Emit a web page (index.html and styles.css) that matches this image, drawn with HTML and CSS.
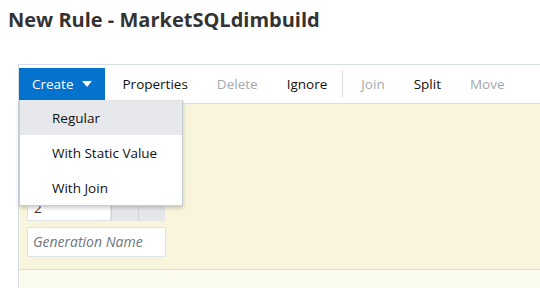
FILE: index.html
```html
<!DOCTYPE html>
<html lang="en">

<head>
    <meta charset="UTF-8">
    <title>New Rule - MarketSQLdimbuild</title>
    <link rel="stylesheet" href="styles.css">
</head>

<body>
    <h1 class="page-title">New Rule - MarketSQLdimbuild</h1>

    <div class="rule-box">
        <div class="toolbar">
            <div class="create-wrap">
                <button class="create-btn">Create <span class="caret"></span></button>
                <ul class="create-menu">
                    <li class="active">Regular</li>
                    <li>With Static Value</li>
                    <li>With Join</li>
                </ul>
            </div>
            <button class="tool-btn">Properties</button>
            <button class="tool-btn disabled">Delete</button>
            <button class="tool-btn">Ignore</button>
            <span class="sep"></span>
            <button class="tool-btn disabled">Join</button>
            <button class="tool-btn">Split</button>
            <button class="tool-btn disabled">Move</button>
        </div>

        <div class="rule-panel">
            <div class="field-row">
                <div class="num-input">2</div>
                <span class="field-btn">
                    <svg width="8" height="5" viewBox="0 0 8 5"><path d="M0 0h8L4 5z" fill="#555"/></svg>
                </span>
                <span class="field-btn">
                    <svg width="8" height="8" viewBox="0 0 8 8"><path d="M1 1l6 6M7 1L1 7" stroke="#555" stroke-width="1.4"/></svg>
                </span>
            </div>
            <div class="name-input">Generation Name</div>
        </div>
        <div class="panel-foot"></div>
    </div>
</body>

</html>
```

FILE: styles.css
```css
body {
    margin: 0;
    padding: 0;
    font-family: "Open Sans", "Noto Sans", sans-serif;
    background-color: #ffffff;
    overflow: hidden;
    height: 288px;
}

.page-title {
    margin: 0;
    padding: 6px 0 0 8px;
    height: 64px;
    box-sizing: border-box;
    font-size: 20px;
    font-weight: 700;
    color: #333333;
    /* Dark Gray */
}

.rule-box {
    margin-left: 18px;
    width: 522px;
    border-left: 1px solid #d6dfe6;
}

.toolbar {
    display: flex;
    align-items: center;
    height: 38px;
    border-top: 1px solid #d6dfe6;
    border-bottom: 1px solid #d6dfe6;
    background-color: #ffffff;
}

.create-wrap {
    position: relative;
    margin-right: 3px;
}

.create-btn {
    display: flex;
    align-items: center;
    gap: 8px;
    height: 32px;
    width: 86px;
    padding: 0 0 0 13px;
    border: none;
    background-color: #0572ce;
    /* Blue */
    color: #ffffff;
    font-family: inherit;
    font-size: 13.5px;
}

.caret {
    width: 0;
    height: 0;
    border-left: 5px solid transparent;
    border-right: 5px solid transparent;
    border-top: 6px solid #ffffff;
}

.create-menu {
    position: absolute;
    top: 32px;
    left: 0;
    width: 162px;
    margin: 0;
    padding: 0;
    list-style: none;
    background-color: #ffffff;
    border: 1px solid #c4ced7;
    border-top: none;
    box-shadow: 0 2px 4px rgba(0, 0, 0, 0.2);
    z-index: 2;
}

.create-menu li {
    height: 35px;
    line-height: 37px;
    padding-left: 32px;
    font-size: 13.5px;
    color: #111111;
}

.create-menu li.active {
    background-color: #e6e8eb;
    /* Light Gray */
}

.tool-btn {
    border: none;
    background: none;
    padding: 0 14.5px;
    font-family: inherit;
    font-size: 13.5px;
    color: #111111;
}

.tool-btn.disabled {
    color: #a3a9b0;
    /* Muted Gray */
}

.sep {
    width: 1px;
    height: 26px;
    background-color: #d6dfe6;
    margin: 0 4px 0 0;
}

.rule-panel {
    height: 166px;
    padding: 91px 0 0 8px;
    box-sizing: border-box;
    background-color: #f8f5dc;
    /* Beige */
    border-bottom: 1px solid #d6dfe6;
}

.field-row {
    display: flex;
    height: 26px;
}

.num-input {
    width: 84px;
    background-color: #ffffff;
    border: 1px solid #dfe4e9;
    box-sizing: border-box;
    padding-left: 6px;
    font-size: 13.5px;
    line-height: 24px;
    color: #333333;
}

.field-btn {
    display: flex;
    justify-content: center;
    align-items: flex-start;
    padding-top: 2px;
    width: 27px;
    box-sizing: border-box;
    background-color: #e4e6e9;
    border-left: 1px solid #d0d5da;
}

.name-input {
    width: 139px;
    height: 30px;
    margin-top: 6px;
    box-sizing: border-box;
    background-color: #ffffff;
    border: 1px solid #dfe4e9;
    padding-left: 5px;
    font-size: 14px;
    line-height: 28px;
    font-style: italic;
    color: #6f7780;
}

.panel-foot {
    height: 30px;
    background-color: #fafaee;
    /* Pale Beige */
}
```
